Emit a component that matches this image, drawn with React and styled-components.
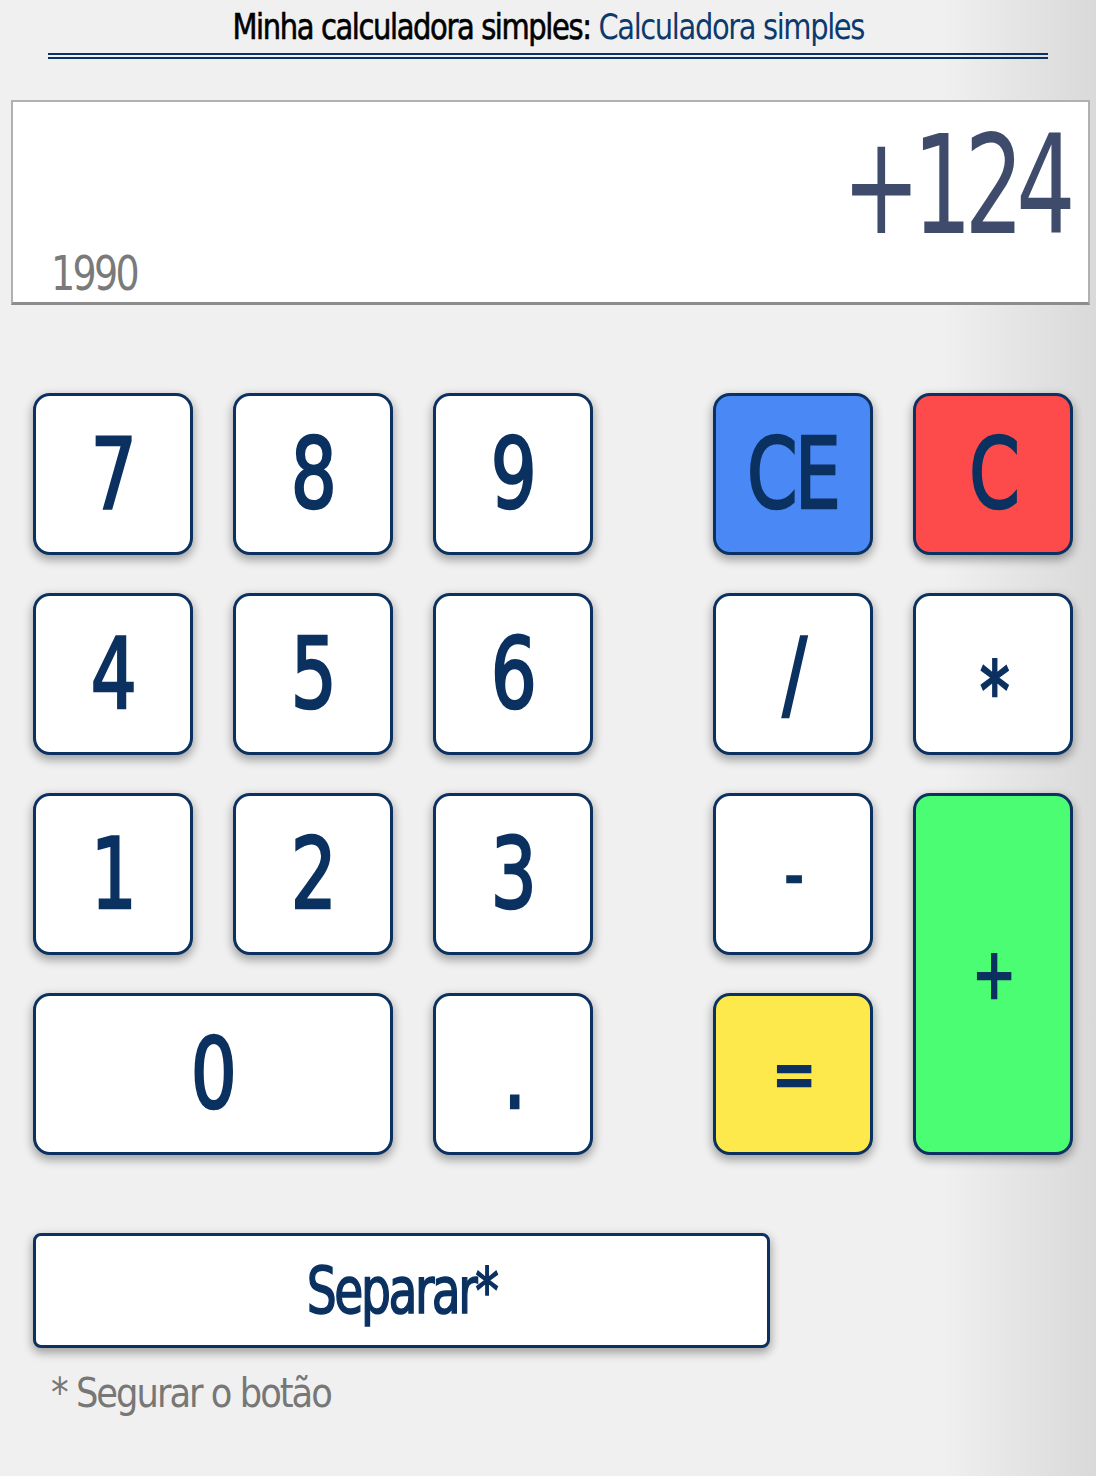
import React from "react";
import styled, { createGlobalStyle } from "styled-components";

const FONT = `"DejaVu Sans Condensed", "Liberation Sans Narrow", "Roboto", sans-serif`;

const GlobalStyle = createGlobalStyle`
  html, body {
    margin: 0;
    padding: 0;
  }
  body {
    font-family: ${FONT};
    background: linear-gradient(to right, #f0f0f0 0%, #f0f0f0 86%, #d9d9d9 100%);
    min-height: 1476px;
  }
`;

const Page = styled.div`
  width: 1096px;
  min-height: 1476px;
`;

const Header = styled.header`
  display: flex;
  flex-direction: column;
  align-items: center;
  padding-top: 5px;
`;

const Title = styled.h1`
  margin: 0;
  font-family: ${FONT};
  font-weight: normal;
  font-size: 35px;
  line-height: 44px;
  color: #000;
  letter-spacing: -1.5px;
  -webkit-text-stroke: 0.6px #000;
  transform: scaleX(0.92);
  white-space: nowrap;
`;

const Accent = styled.span`
  color: #0d3a6e;
  -webkit-text-stroke: 0;
`;

const Rule = styled.div`
  width: 1000px;
  height: 2px;
  margin-top: 4px;
  border-top: 2px solid #0b3160;
  border-bottom: 2px solid #0b3160;
`;

const Display = styled.section`
  margin: 41px 6px 0 11px;
  height: 200px;
  background: #fff;
  border: 2px solid #b0b0b0;
  border-bottom: 3px solid #8c8c8c;
  display: flex;
  flex-direction: column;
  justify-content: space-between;
  padding: 0 20px 0 38px;
`;

const Current = styled.div`
  align-self: flex-end;
  font-size: 138px;
  line-height: 120px;
  color: #3e4b6a;
  letter-spacing: -10px;
  transform: scaleX(0.75);
  transform-origin: right center;
  margin-top: 24px;
`;

const History = styled.div`
  align-self: flex-start;
  font-size: 48px;
  line-height: 50px;
  color: #7a7a7a;
  letter-spacing: -3px;
  transform: scaleX(0.88);
  transform-origin: left center;
  margin-bottom: 4px;
`;

const Keypad = styled.div`
  display: grid;
  grid-template-columns: 160px 160px 160px 40px 160px 160px;
  grid-auto-rows: 162px;
  column-gap: 40px;
  row-gap: 38px;
  padding: 88px 0 0 33px;
`;

const COLORS = {
  white: "#ffffff",
  blue: "#4a89f5",
  red: "#fd4b4b",
  green: "#4bfd73",
  yellow: "#fde94b",
};

const Key = styled.button`
  grid-column: ${(p) => p.$col} / span ${(p) => p.$w || 1};
  grid-row: ${(p) => p.$row} / span ${(p) => p.$h || 1};
  background: ${(p) => COLORS[p.$color || "white"]};
  border: 3px solid #0b3160;
  border-radius: 17px;
  box-shadow: 0 4px 10px 1px rgba(0, 0, 0, 0.33);
  color: #0b3160;
  font-family: ${FONT};
  font-weight: normal;
  font-size: ${(p) => p.$size || 98}px;
  line-height: 1;
  -webkit-text-stroke: 2.5px #0b3160;
  padding: ${(p) => p.$drop || 0}px 0 0;
  display: flex;
  align-items: center;
  justify-content: center;
  cursor: pointer;
`;

const KeyLabel = styled.span`
  display: inline-block;
  transform: scaleX(0.82);
  letter-spacing: -3px;
`;

const Footer = styled.div`
  padding: 78px 0 0 33px;
`;

const Wide = styled.button`
  width: 737px;
  height: 115px;
  background: #fff;
  border: 3px solid #0b3160;
  border-radius: 8px;
  box-shadow: 0 4px 10px 1px rgba(0, 0, 0, 0.33);
  color: #0b3160;
  font-family: ${FONT};
  font-weight: normal;
  font-size: 64px;
  -webkit-text-stroke: 1.5px #0b3160;
  display: flex;
  align-items: center;
  justify-content: center;
  padding: 0;
`;

const Note = styled.p`
  margin: 22px 0 0 18px;
  font-size: 40px;
  line-height: 46px;
  color: #777;
  letter-spacing: -2px;
  transform: scaleX(0.98);
  transform-origin: left center;
`;

const keys = [
  { label: "7", col: 1, row: 1 },
  { label: "8", col: 2, row: 1 },
  { label: "9", col: 3, row: 1 },
  { label: "CE", col: 5, row: 1, color: "blue" },
  { label: "C", col: 6, row: 1, color: "red" },
  { label: "4", col: 1, row: 2 },
  { label: "5", col: 2, row: 2 },
  { label: "6", col: 3, row: 2 },
  { label: "/", col: 5, row: 2 },
  { label: "*", col: 6, row: 2, size: 80, drop: 36 },
  { label: "1", col: 1, row: 3 },
  { label: "2", col: 2, row: 3 },
  { label: "3", col: 3, row: 3 },
  { label: "-", col: 5, row: 3, size: 70 },
  { label: "+", col: 6, row: 3, h: 2, color: "green", size: 70 },
  { label: "0", col: 1, row: 4, w: 2 },
  { label: ".", col: 3, row: 4 },
  { label: "=", col: 5, row: 4, color: "yellow", size: 70 },
];

export default function App() {
  return (
    <Page>
      <GlobalStyle />
      <Header>
        <Title>
          Minha calculadora simples: <Accent>Calculadora simples</Accent>
        </Title>
        <Rule />
      </Header>

      <Display>
        <Current>+124</Current>
        <History>1990</History>
      </Display>

      <Keypad>
        {keys.map((k) => (
          <Key
            key={k.label}
            $col={k.col}
            $row={k.row}
            $w={k.w}
            $h={k.h}
            $color={k.color}
            $size={k.size}
            $drop={k.drop}
          >
            <KeyLabel>{k.label}</KeyLabel>
          </Key>
        ))}
      </Keypad>

      <Footer>
        <Wide>
          <KeyLabel>Separar*</KeyLabel>
        </Wide>
        <Note>* Segurar o botão</Note>
      </Footer>
    </Page>
  );
}
